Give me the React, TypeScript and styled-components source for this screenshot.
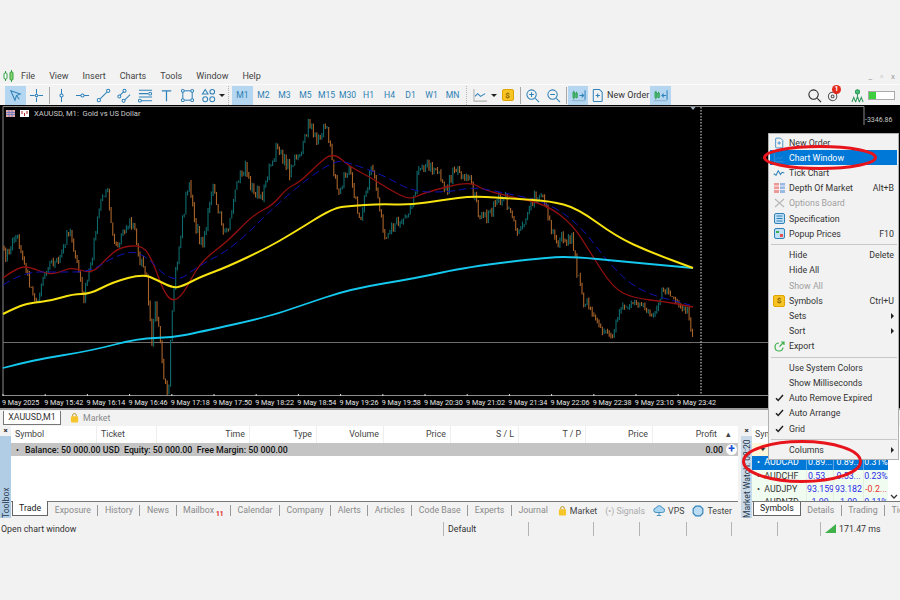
import styled, { createGlobalStyle } from "styled-components";

const GlobalStyle = createGlobalStyle`
  html, body {
    margin: 0;
    padding: 0;
    background: #f2f2f2;
  }
  * {
    box-sizing: border-box;
  }
`;

const Page = styled.div`
  position: relative;
  width: 900px;
  height: 600px;
  overflow: hidden;
  background: #f2f2f2;
  color: #333;
  font-family: Roboto, "Noto Sans", sans-serif;
  font-size: 8.8px;
  padding-top: 68px;
`;

const MenuBar = styled.div`
  display: flex;
  align-items: center;
  height: 16px;
`;

const AppIcon = styled.svg`
  width: 14px;
  height: 14px;
  margin-left: 2px;
  margin-right: -2px;
`;

const MenuItem = styled.span`
  padding: 0 7px;
  font-size: 9px;
  color: #444;
`;

const WindowButtons = styled.div`
  display: flex;
  gap: 8px;
  margin-left: auto;
  margin-right: 5px;
  color: #999;
  font-size: 8px;
`;

const Toolbar = styled.div`
  display: flex;
  align-items: center;
  height: 21px;
  padding-left: 5px;
  border-top: 1px solid #fbfbfb;
`;

const ToolButton = styled.div<{ $active?: boolean; $w?: number }>`
  display: flex;
  align-items: center;
  justify-content: center;
  flex: none;
  width: ${(p) => p.$w ?? 21}px;
  height: 19px;
  background: ${(p) => (p.$active ? "#b4d6f0" : "transparent")};
  color: #2c7fb4;
  font-size: 8.6px;
`;

const Sep = styled.div<{ $w?: number }>`
  flex: none;
  width: ${(p) => p.$w ?? 4}px;
  height: 17px;
  margin: 0;
  background: linear-gradient(#a8a8a8, #a8a8a8) center / 1px 100% no-repeat;
`;

const Grip = styled.div`
  flex: none;
  width: 7px;
  height: 19px;
  background: repeating-linear-gradient(#b5b5b5 0 1px, transparent 1px 2px) center / 1px 100% no-repeat;
`;

const Caret = styled.span`
  flex: none;
  width: 6px;
  height: 0;
  border: 3px solid transparent;
  border-top: 3px solid #222;
  border-bottom: 0;
`;

const Icon = styled.svg`
  width: 15px;
  height: 15px;
  fill: none;
  stroke: #2f82b8;
  stroke-width: 1.1;
`;

const Coin = styled.span`
  display: flex;
  align-items: center;
  justify-content: center;
  width: 12px;
  height: 12px;
  border-radius: 2px;
  background: #f7c325;
  border: 1px solid #e0a400;
  color: #8a6400;
  font-size: 8px;
  font-weight: bold;
`;

const OrderText = styled.span`
  flex: none;
  width: 43px;
  color: #333;
  font-size: 9px;
  white-space: nowrap;
`;

const RightTools = styled.div`
  display: flex;
  align-items: center;
  margin-left: auto;
  padding-right: 5px;
`;

const SearchIcon = styled(Icon)`
  stroke: #222;
  margin-right: 5px;
`;

const BellWrap = styled.div`
  position: relative;
  width: 14px;
  height: 14px;
  margin-right: 9px;
`;

const Badge = styled.span`
  position: absolute;
  left: 5px;
  top: -3px;
  width: 9px;
  height: 9px;
  border-radius: 50%;
  background: #e32a1c;
  color: #fff;
  font-size: 7px;
  font-weight: bold;
  line-height: 9px;
  text-align: center;
`;

const Battery = styled.div`
  width: 27px;
  height: 9px;
  margin-left: 3px;
  border: 1px solid #aaa;
  background: #fff;
`;

const BatteryLevel = styled.div`
  width: 7px;
  height: 100%;
  background: #3ecf3e;
`;

const ChartWindow = styled.div`
  display: flex;
  flex-direction: column;
  height: 305px;
  background: #000;
  position: relative;
  border-bottom: 2px solid #9a9a9a;
`;

const PlotRow = styled.div`
  display: flex;
  height: 291px;
`;

const Plot = styled.svg`
  display: block;
  flex: none;
  width: 865px;
  height: 291px;
`;

const PriceAxis = styled.div`
  flex: 1;
  padding-top: 11px;
  color: #c8c8c8;
  font-size: 7px;
`;

const TimeAxis = styled.div`
  display: flex;
  padding-left: 2px;
  height: 12px;
  align-items: center;
`;

const TimeLabel = styled.span`
  flex: none;
  width: 42.2px;
  color: #e4e4e4;
  font-size: 7.2px;
  white-space: nowrap;
`;

const Legend = styled.div`
  position: absolute;
  left: 6px;
  top: 4px;
  display: flex;
  align-items: center;
  gap: 4px;
  color: #ccc;
  font-size: 7.6px;
  white-space: pre;
`;

const ChartTabs = styled.div`
  display: flex;
  align-items: center;
  height: 15px;
  padding-left: 3px;
`;

const ChartTab = styled.div`
  display: flex;
  align-items: center;
  justify-content: center;
  width: 58px;
  height: 14px;
  background: #fff;
  border: 1px solid #777;
  border-top: 0;
  border-right-width: 1.5px;
  border-bottom-width: 1.5px;
  font-size: 8.8px;
`;

const MarketTab = styled.div`
  display: flex;
  align-items: center;
  gap: 4px;
  margin-left: 9px;
  color: #888;
  font-size: 8.8px;
`;

const Bag = styled.svg`
  width: 9px;
  height: 10px;
  flex: none;
`;

const BottomRow = styled.div`
  display: flex;
  height: 92px;
  margin-top: 1px;
`;

const ToolboxPanel = styled.div`
  display: flex;
  flex: none;
  width: 738px;
`;

const SideStrip = styled.div`
  display: flex;
  flex-direction: column;
  flex: none;
  width: 11px;
`;

const CloseMark = styled.div`
  height: 10px;
  font-size: 8px;
  font-weight: bold;
  line-height: 9px;
  text-align: center;
  color: #222;
`;

const SideTitle = styled.div<{ $tint: string }>`
  flex: 1;
  display: flex;
  align-items: center;
  justify-content: flex-start;
  writing-mode: vertical-rl;
  transform: rotate(180deg);
  background: ${(p) => p.$tint};
  color: #27384a;
  font-size: 8.6px;
  line-height: 10px;
  white-space: nowrap;
  overflow: hidden;
`;

const PanelBody = styled.div`
  display: flex;
  flex-direction: column;
  flex: 1;
  min-width: 0;
`;

const TradeList = styled.div`
  flex: 1;
  background: #fff;
  border-bottom: 1px solid #777;
`;

const TradeHead = styled.div`
  display: grid;
  grid-template-columns: 86px 60px 93px 67px 67px 67px 68px 67px 67px 1fr;
  height: 17px;
  align-items: center;
`;

const HeadCell = styled.div<{ $left?: boolean }>`
  height: 100%;
  padding: 0 4px;
  line-height: 17px;
  text-align: ${(p) => (p.$left ? "left" : "right")};
  border-right: 1px solid #eee;
  color: #444;
  font-size: 8.8px;
`;

const ProfitCell = styled(HeadCell)`
  display: flex;
  justify-content: flex-end;
  gap: 9px;
  padding-right: 7px;
  border-right: 0;
`;

const BalanceRow = styled.div`
  display: flex;
  align-items: center;
  height: 13px;
  padding-left: 5px;
  background: #c4c4c4;
  color: #111;
  font-size: 8.8px;
  font-weight: 500;
  white-space: pre;
`;

const Bullet = styled.span`
  width: 9px;
  font-weight: normal;
`;

const BalanceTotal = styled.span`
  margin-left: auto;
  margin-right: 3px;
`;

const PlusBadge = styled.span`
  width: 11px;
  height: 11px;
  margin-right: 1px;
  border-radius: 50%;
  background: #fff;
  color: #1c4fd8;
  font-size: 12px;
  font-weight: bold;
  line-height: 10px;
  text-align: center;
`;

const TabBar = styled.div`
  display: flex;
  align-items: flex-start;
  flex: none;
  height: 16px;
  padding-left: 1px;
`;

const ActiveTab = styled.div`
  flex: none;
  height: 15px;
  padding: 0 6px;
  margin-top: -1px;
  background: #fff;
  border: 1px solid #666;
  border-top: 0;
  border-bottom-width: 1.5px;
  border-right-width: 1.5px;
  color: #222;
  font-size: 8.8px;
  line-height: 15px;
`;

const Tab = styled.div<{ $plain?: boolean }>`
  flex: none;
  height: 11px;
  margin-top: 3px;
  padding: 0 6.5px;
  border-right: ${(p) => (p.$plain ? "0" : "1px solid #999")};
  color: #8a8a8a;
  font-size: 8.8px;
  line-height: 11px;
`;

const MailCount = styled.sup`
  color: #e02020;
  font-size: 6.6px;
  margin-left: 2px;
  vertical-align: -3px;
  font-weight: bold;
`;

const SideLinks = styled.div`
  display: flex;
  align-items: center;
  gap: 8px;
  margin-left: auto;
  margin-top: 2px;
  padding-right: 6px;
  height: 14px;
`;

const SideLink = styled.span<{ $muted?: boolean }>`
  display: flex;
  align-items: center;
  gap: 3px;
  color: ${(p) => (p.$muted ? "#aaa" : "#444")};
  font-size: 8.8px;
  white-space: nowrap;
`;

const SmallIcon = styled(Icon)`
  width: 12px;
  height: 12px;
`;

const WatchPanel = styled.div`
  display: flex;
  flex: 1;
  margin-left: 3px;
  min-width: 0;
`;

const WatchList = styled.div`
  position: relative;
  flex: 1;
  background: #fff;
  border-bottom: 1px solid #777;
  overflow: hidden;
`;

const WatchHead = styled.div`
  height: 17px;
  padding-left: 3px;
  line-height: 17px;
  color: #444;
`;

const WatchRow = styled.div<{ $bg: string }>`
  display: grid;
  grid-template-columns: 54px 27px 30px 25px;
  height: 13.3px;
  width: 136px;
  background: ${(p) => p.$bg};
  line-height: 13px;
  font-size: 8.8px;
`;

const WatchName = styled.span<{ $selected?: boolean }>`
  padding-left: 5px;
  color: ${(p) => (p.$selected ? "#fff" : "#333")};
  white-space: pre;
  overflow: hidden;
`;

const WatchValue = styled.span<{ $color: string; $line?: boolean }>`
  text-align: center;
  color: ${(p) => p.$color};
  border-left: 1px solid ${(p) => (p.$line ? "#5aa5e4" : "#e4efe4")};
  white-space: nowrap;
  overflow: hidden;
`;

const ScrollDown = styled.svg`
  position: absolute;
  right: 2px;
  bottom: 1px;
  width: 8px;
  height: 6px;
`;

const StatusBar = styled.div`
  display: flex;
  align-items: center;
  height: 19px;
  margin-top: 1px;
  font-size: 8.8px;
`;

const StatusCell = styled.div<{ $w: number; $first?: boolean }>`
  flex: none;
  display: flex;
  align-items: center;
  gap: 3px;
  width: ${(p) => p.$w}px;
  height: 14px;
  padding-left: ${(p) => (p.$first ? 1 : 4)}px;
  border-left: ${(p) => (p.$first ? "0" : "1px solid #b4b4b4")};
  color: #333;
  white-space: nowrap;
`;

const ContextMenu = styled.div`
  position: absolute;
  left: 768px;
  top: 133px;
  width: 131px;
  padding: 1px;
  background: #f2f2f2;
  border: 1px solid #b0b0b0;
`;

const MenuRow = styled.div<{ $selected?: boolean; $disabled?: boolean }>`
  display: flex;
  align-items: center;
  height: 15.2px;
  background: ${(p) => (p.$selected ? "#0078d7" : "transparent")};
  color: ${(p) => (p.$selected ? "#fff" : p.$disabled ? "#a0a0a0" : "#333")};
  font-size: 8.8px;
`;

const MenuGlyph = styled.span`
  display: flex;
  align-items: center;
  justify-content: center;
  flex: none;
  width: 18px;
  margin-right: 1px;
`;

const MenuHint = styled.span`
  margin-left: auto;
  padding-right: 3px;
`;

const SubArrow = styled.span`
  margin-left: auto;
  margin-right: 3px;
  width: 0;
  height: 0;
  border: 3px solid transparent;
  border-left: 3.5px solid #222;
  border-right: 0;
`;

const MenuSep = styled.div`
  height: 1px;
  margin: 2.6px 0 2.7px 1px;
  background: #c8c8c8;
`;

const RedMark = styled.svg<{ $left: number; $top: number }>`
  position: absolute;
  left: ${(p) => p.$left}px;
  top: ${(p) => p.$top}px;
  overflow: visible;
  pointer-events: none;
`;

type Pt = [number, number];

const priceLine: Pt[] = [
  [4, 248], [15, 242], [23, 262], [38, 295], [53, 265], [68, 232], [83, 295], [97, 228], [107, 192], [117, 245],
  [133, 228], [147, 272], [152, 358], [155, 312], [165, 382], [168, 388], [173, 292], [189, 185], [203, 248],
  [213, 195], [227, 228], [245, 162], [262, 208], [277, 135], [290, 182], [308, 118], [317, 152], [327, 117],
  [339, 202], [350, 172], [360, 212], [372, 178], [385, 227], [402, 230], [417, 175], [440, 168], [447, 192],
  [467, 162], [480, 228], [497, 192], [510, 218], [523, 222], [545, 193], [558, 253], [572, 230], [583, 305],
  [598, 322], [613, 338], [622, 305], [633, 302], [652, 315], [662, 292], [687, 308], [693, 342],
];

const yellowLine: Pt[] = [
  [3, 314], [17, 307], [30, 303], [50, 301], [73, 294], [90, 294], [113, 282], [143, 274], [157, 280], [173, 288],
  [183, 286], [200, 277], [227, 267], [267, 248], [293, 233], [333, 208], [350, 206], [380, 204], [410, 205],
  [443, 200], [473, 196], [517, 199], [550, 201], [577, 208], [617, 237], [650, 252], [693, 268],
];

const cyanLine: Pt[] = [
  [3, 368], [33, 360], [90, 351], [140, 338], [170, 338], [200, 332], [267, 317], [300, 306], [350, 289], [417, 278],
  [467, 267], [550, 257], [577, 257], [617, 261], [693, 268],
];

const redLine: Pt[] = [
  [3, 278], [18, 267], [30, 267], [47, 274], [58, 273], [72, 267], [92, 274], [107, 258], [120, 247], [143, 245],
  [153, 262], [163, 290], [172, 302], [183, 295], [200, 262], [227, 242], [253, 215], [273, 205], [287, 188],
  [300, 182], [317, 165], [333, 152], [350, 167], [370, 177], [390, 190], [410, 200], [423, 193], [470, 181],
  [483, 190], [517, 198], [547, 205], [573, 225], [590, 252], [613, 288], [633, 298], [667, 302], [693, 307],
];

const blueLine: Pt[] = [
  [3, 285], [23, 272], [57, 272], [90, 272], [113, 257], [140, 249], [173, 285], [200, 265], [233, 248], [283, 198],
  [333, 160], [350, 163], [383, 175], [413, 192], [450, 192], [473, 187], [500, 192], [547, 202], [580, 225],
  [610, 265], [640, 292], [690, 305],
];

// midpoints give a soft curve without a real spline
function smooth(pts: Pt[]) {
  let d = `M${pts[0][0]} ${pts[0][1]}`;
  for (let i = 1; i < pts.length - 1; i++) {
    const mx = (pts[i][0] + pts[i + 1][0]) / 2;
    const my = (pts[i][1] + pts[i + 1][1]) / 2;
    d += `Q${pts[i][0]} ${pts[i][1]} ${mx} ${my}`;
  }
  const last = pts[pts.length - 1];
  return d + `L${last[0]} ${last[1]}`;
}

function priceAt(x: number) {
  for (let i = 1; i < priceLine.length; i++) {
    const [x0, y0] = priceLine[i - 1];
    const [x1, y1] = priceLine[i];
    if (x <= x1) return y0 + ((y1 - y0) * (x - x0)) / (x1 - x0);
  }
  return priceLine[priceLine.length - 1][1];
}

function makeCandles() {
  let seed = 4127;
  const rnd = () => {
    seed = (seed * 16807) % 2147483647;
    return seed / 2147483647;
  };
  let up = "";
  let down = "";
  let open = priceAt(4);
  for (let x = 4; x <= 693; x += 1.7) {
    // tail end of the chart is much calmer than the rest
    const size = x > 590 ? 8 : 20;
    const wave = Math.sin(x / 4.3) * size * 0.45;
    const close = priceAt(x) + wave + (rnd() - 0.5) * size * 0.6;
    const top = Math.min(open, close);
    const bottom = Math.max(open, close);
    const hi = (top - rnd() * 3).toFixed(1);
    const lo = (bottom + rnd() * 3).toFixed(1);
    const seg = `M${x.toFixed(1)} ${hi}V${lo}`;
    if (close > open) down += seg;
    else up += seg;
    open = close;
  }
  return { up, down };
}

const candles = makeCandles();

const timeLabels = [
  "9 May 2025", "9 May 15:42", "9 May 16:14", "9 May 16:46", "9 May 17:18", "9 May 17:50", "9 May 18:22", "9 May 18:54",
  "9 May 19:26", "9 May 19:58", "9 May 20:30", "9 May 21:02", "9 May 21:34", "9 May 22:06", "9 May 22:38", "9 May 23:10",
  "9 May 23:42",
];

const timeframes = ["M1", "M2", "M3", "M5", "M15", "M30", "H1", "H4", "D1", "W1", "MN"];

const bottomTabs = ["Exposure", "History", "News", "Mailbox", "Calendar", "Company", "Alerts", "Articles", "Code Base", "Experts", "Journal"];

const CandlesIcon = ({ dir }: { dir: "in" | "out" }) => (
  <Icon viewBox="0 0 16 16">
    <path d="M1 13.5h14" stroke="#8fb4cc" />
    <path d="M3 3v9M6 4v7" stroke="#2c9a4c" />
    <rect x="2" y="5" width="2" height="5" fill="#42b96a" stroke="#2c9a4c" strokeWidth=".6" />
    <rect x="5" y="6" width="2" height="4" fill="#42b96a" stroke="#2c9a4c" strokeWidth=".6" />
    {dir === "out" ? <path d="M9 8h4M11.5 6l2 2-2 2" /> : <path d="M14 8h-4M11.5 6l-2 2 2 2" />}
    <path d="M15 2.5v10" />
  </Icon>
);

const BagIcon = () => (
  <Bag viewBox="0 0 10 11">
    <path d="M3 4V2.5a2 2 0 0 1 4 0V4" fill="none" stroke="#b98a10" />
    <rect x="1" y="3.5" width="8" height="7" rx="1" fill="#f6c52b" />
  </Bag>
);

const Check = () => (
  <svg width="9" height="8" viewBox="0 0 9 8">
    <path d="M1 4.2l2.2 2.3L8 1" fill="none" stroke="#222" strokeWidth="1.5" />
  </svg>
);

export default function App() {
  return (
    <Page>
      <GlobalStyle />
      <MenuBar>
        <AppIcon viewBox="0 0 14 14">
          <path d="M3.5 2v10M9.5 1v12" stroke="#2ea043" />
          <rect x="2" y="4" width="3" height="6" rx="1" fill="#fff" stroke="#2ea043" />
          <rect x="8" y="3" width="3" height="8" rx="1" fill="#8ed36b" stroke="#2ea043" />
        </AppIcon>
        {["File", "View", "Insert", "Charts", "Tools", "Window", "Help"].map((m) => (
          <MenuItem key={m}>{m}</MenuItem>
        ))}
        <WindowButtons>
          <span>_</span>
          <span>▫</span>
          <span>x</span>
        </WindowButtons>
      </MenuBar>

      <Toolbar>
        <ToolButton $active>
          <Icon viewBox="0 0 16 16">
            <path d="M3 3l10 3.5-4 1.6L7.4 13z" />
            <path d="M9 8l3 4" />
          </Icon>
        </ToolButton>
        <ToolButton>
          <Icon viewBox="0 0 16 16">
            <path d="M8 1v5M8 10v5M1 8h5M10 8h5" />
            <circle cx="8" cy="8" r="1.4" />
          </Icon>
        </ToolButton>
        <Sep />
        <ToolButton>
          <Icon viewBox="0 0 16 16">
            <path d="M8 1v14" />
            <circle cx="8" cy="8" r="1.7" fill="#fff" />
          </Icon>
        </ToolButton>
        <ToolButton>
          <Icon viewBox="0 0 16 16">
            <path d="M1 8h14" />
            <circle cx="8" cy="8" r="1.7" fill="#fff" />
          </Icon>
        </ToolButton>
        <ToolButton>
          <Icon viewBox="0 0 16 16">
            <path d="M3 13L13 3" />
            <circle cx="3" cy="13" r="1.7" fill="#fff" />
            <circle cx="13" cy="3" r="1.7" fill="#fff" />
          </Icon>
        </ToolButton>
        <ToolButton>
          <Icon viewBox="0 0 16 16">
            <path d="M2 9l6-6M7 14l7-7" />
            <circle cx="2.5" cy="9" r="1.6" fill="#fff" />
            <circle cx="8" cy="3" r="1.6" fill="#fff" />
            <circle cx="7" cy="13.5" r="1.6" fill="#fff" />
          </Icon>
        </ToolButton>
        <ToolButton>
          <Icon viewBox="0 0 16 16">
            <path d="M1 2.5h14M1 6h10M1 9.5h14M3 13.5h12" />
            <circle cx="13" cy="6" r="1.5" fill="#fff" />
            <circle cx="2" cy="13.5" r="1.5" fill="#fff" />
          </Icon>
        </ToolButton>
        <ToolButton>
          <Icon viewBox="0 0 16 16">
            <path d="M3 3h10M8 3v11" strokeWidth="1.3" />
          </Icon>
        </ToolButton>
        <ToolButton>
          <Icon viewBox="0 0 16 16">
            <rect x="3" y="3" width="10" height="10" />
            <circle cx="3" cy="3" r="1.5" fill="#fff" />
            <circle cx="13" cy="3" r="1.5" fill="#fff" />
            <circle cx="3" cy="13" r="1.5" fill="#fff" />
            <circle cx="13" cy="13" r="1.5" fill="#fff" />
          </Icon>
        </ToolButton>
        <ToolButton>
          <Icon viewBox="0 0 16 16">
            <path d="M4.5 1.5l3 5h-6z" />
            <circle cx="12" cy="4" r="2.5" />
            <circle cx="4.5" cy="12" r="2.6" />
            <circle cx="12" cy="12" r="2.6" />
          </Icon>
        </ToolButton>
        <Caret />
        <Grip />
        {timeframes.map((t, i) => (
          <ToolButton key={t} $active={i === 0}>
            {t}
          </ToolButton>
        ))}
        <Grip />
        <ToolButton>
          <Icon viewBox="0 0 16 16">
            <path d="M1 1v13h14" stroke="#b0b0b0" />
            <path d="M2 9l3-3 3 3 5-3" />
          </Icon>
        </ToolButton>
        <Caret />
        <ToolButton>
          <Coin>$</Coin>
        </ToolButton>
        <Sep />
        <ToolButton>
          <Icon viewBox="0 0 16 16">
            <circle cx="7" cy="7" r="5" />
            <path d="M4.5 7h5M7 4.5v5M11 11l4 4" />
          </Icon>
        </ToolButton>
        <ToolButton>
          <Icon viewBox="0 0 16 16">
            <circle cx="7" cy="7" r="5" />
            <path d="M4.5 7h5M11 11l4 4" />
          </Icon>
        </ToolButton>
        <Sep />
        <ToolButton $active $w={20}>
          <CandlesIcon dir="out" />
        </ToolButton>
        <ToolButton $w={19}>
          <Icon viewBox="0 0 16 16">
            <path d="M3.5 2.5a1 1 0 0 1 1-1H10l3 3v9a1 1 0 0 1-1 1H4.500a1 1 0 0 1-1-1z" />
            <path d="M6 8h4.500M8.200 5.800v4.400" strokeWidth="1.2" />
          </Icon>
        </ToolButton>
        <OrderText>New Order</OrderText>
        <ToolButton $active>
          <CandlesIcon dir="in" />
        </ToolButton>
        <RightTools>
          <SearchIcon viewBox="0 0 16 16">
            <circle cx="7" cy="7" r="5" />
            <path d="M11 11l4 4" />
          </SearchIcon>
          <BellWrap>
            <Icon viewBox="0 0 16 16">
              <circle cx="6" cy="9" r="4.500" stroke="#555" />
              <circle cx="6" cy="9" r="1.500" stroke="#555" />
            </Icon>
            <Badge>1</Badge>
          </BellWrap>
          <Icon viewBox="0 0 16 16">
            <circle cx="8" cy="4" r="2.200" stroke="#2f9a5a" fill="#49c27a" />
            <path d="M8 6v3M2 15l2-5 2 5M10 15l2-5 2 5M6 15l2-6 2 6" stroke="#2f9a5a" />
          </Icon>
          <Battery>
            <BatteryLevel />
          </Battery>
        </RightTools>
      </Toolbar>

      <ChartWindow>
        <PlotRow>
          <Plot viewBox="0 105 865 291">
            <path d="M3 396V106.500H864V125" fill="none" stroke="#8c8c8c" />
            <path d="M3 395.500H864" stroke="#8c8c8c" />
            <path d="M3 342.500H864" stroke="#6e6e6e" />
            <path d="M701 107V394" stroke="#e6e6e6" strokeDasharray="1.500 1.500" />
            <path d="M690.500 107h5l-2.500 3z" fill="#9cb0c0" />
            {timeLabels.map((t, i) => (
              <path key={t} d={`M${3 + i * 42.2} 394V396`} stroke="#ddd" />
            ))}
            <path d={candles.up} stroke="#0f6a6c" strokeWidth="1.100" fill="none" />
            <path d={candles.down} stroke="#a9642a" strokeWidth="1.100" fill="none" />
            <path d={smooth(redLine)} stroke="#930f0f" strokeWidth="1.300" fill="none" />
            <path d={smooth(blueLine)} stroke="#1111b8" strokeWidth="1" strokeDasharray="8 4" fill="none" />
            <path d={smooth(cyanLine)} stroke="#14c8ee" strokeWidth="1.800" fill="none" />
            <path d={smooth(yellowLine)} stroke="#f7e30f" strokeWidth="2" fill="none" />
          </Plot>
          <PriceAxis>-3346.86</PriceAxis>
        </PlotRow>
        <TimeAxis>
          {timeLabels.map((t) => (
            <TimeLabel key={t}>{t}</TimeLabel>
          ))}
        </TimeAxis>
        <Legend>
          <svg width="24" height="7" viewBox="0 0 24 7">
            <rect width="9" height="7" fill="#e8a8a8" />
            <path d="M0 2.500h9M0 4.500h9M3 0v7M6 0v7" stroke="#5f78c8" strokeWidth=".8" />
            <rect x="14" width="9" height="7" fill="#fff" />
            <path d="M16 1v3M18.500 3v3M21 1v3" stroke="#c02020" />
          </svg>
          <span>XAUUSD, M1:  Gold vs US Dollar</span>
        </Legend>
      </ChartWindow>

      <ChartTabs>
        <ChartTab>XAUUSD,M1</ChartTab>
        <MarketTab>
          <BagIcon />
          Market
        </MarketTab>
      </ChartTabs>

      <BottomRow>
        <ToolboxPanel>
          <SideStrip>
            <CloseMark>×</CloseMark>
            <SideTitle $tint="#b1cde6">Toolbox</SideTitle>
          </SideStrip>
          <PanelBody>
            <TradeList>
              <TradeHead>
                <HeadCell $left>Symbol</HeadCell>
                <HeadCell $left>Ticket</HeadCell>
                <HeadCell>Time</HeadCell>
                <HeadCell>Type</HeadCell>
                <HeadCell>Volume</HeadCell>
                <HeadCell>Price</HeadCell>
                <HeadCell>S / L</HeadCell>
                <HeadCell>T / P</HeadCell>
                <HeadCell>Price</HeadCell>
                <ProfitCell>
                  <span>Profit</span>
                  <span>▴</span>
                </ProfitCell>
              </TradeHead>
              <BalanceRow>
                <Bullet>•</Bullet>
                Balance: 50 000.00 USD  Equity: 50 000.00  Free Margin: 50 000.00
                <BalanceTotal>0.00</BalanceTotal>
                <PlusBadge>+</PlusBadge>
              </BalanceRow>
            </TradeList>
            <TabBar>
              <ActiveTab>Trade</ActiveTab>
              {bottomTabs.map((t, i) => (
                <Tab key={t} $plain={i === bottomTabs.length - 1}>
                  {t}
                  {t === "Mailbox" && <MailCount>11</MailCount>}
                </Tab>
              ))}
              <SideLinks>
                <SideLink>
                  <BagIcon />
                  Market
                </SideLink>
                <SideLink $muted>(•) Signals</SideLink>
                <SideLink>
                  <SmallIcon viewBox="0 0 16 16">
                    <path d="M4 10a3 3 0 0 1 0-6 4.500 4.500 0 0 1 8.500 0 3 3 0 0 1 0 6z" fill="#a9d5f2" />
                    <path d="M8 10v4M5 14h6" />
                  </SmallIcon>
                  VPS
                </SideLink>
                <SideLink>
                  <SmallIcon viewBox="0 0 16 16">
                    <path d="M5 1.500h6L14.500 5v6L11 14.500H5L1.500 11V5z" fill="#bcdcf4" strokeWidth="1.500" />
                  </SmallIcon>
                  Tester
                </SideLink>
              </SideLinks>
            </TabBar>
          </PanelBody>
        </ToolboxPanel>

        <WatchPanel>
          <SideStrip>
            <CloseMark>×</CloseMark>
            <SideTitle $tint="#c9d9e8">Market Watch: 08:20</SideTitle>
          </SideStrip>
          <PanelBody>
            <WatchList>
              <WatchHead>Symbol</WatchHead>
              <WatchRow $bg="#fdf6d8">
                <WatchName> ✦ XAUUSD</WatchName>
              </WatchRow>
              <WatchRow $bg="#0078d7">
                <WatchName $selected>•  AUDCAD</WatchName>
                <WatchValue $color="#fff" $line>0.89...</WatchValue>
                <WatchValue $color="#fff" $line>0.89...</WatchValue>
                <WatchValue $color="#fff" $line>0.31%</WatchValue>
              </WatchRow>
              <WatchRow $bg="#f1fcf1">
                <WatchName>•  AUDCHF</WatchName>
                <WatchValue $color="#2a2ae8">0.53...</WatchValue>
                <WatchValue $color="#2a2ae8">0.53...</WatchValue>
                <WatchValue $color="#2a2ae8">0.23%</WatchValue>
              </WatchRow>
              <WatchRow $bg="#f1fcf1">
                <WatchName>•  AUDJPY</WatchName>
                <WatchValue $color="#2a2ae8">93.159</WatchValue>
                <WatchValue $color="#2a2ae8">93.182</WatchValue>
                <WatchValue $color="#e83030">-0.2...</WatchValue>
              </WatchRow>
              <WatchRow $bg="#f1fcf1">
                <WatchName>•  AUDNZD</WatchName>
                <WatchValue $color="#2a2ae8">1.09</WatchValue>
                <WatchValue $color="#2a2ae8">1.09</WatchValue>
                <WatchValue $color="#2a2ae8">0.11%</WatchValue>
              </WatchRow>
              <ScrollDown viewBox="0 0 8 6">
                <path d="M1 1l3 3 3-3" fill="none" stroke="#333" strokeWidth="1.300" />
              </ScrollDown>
            </WatchList>
            <TabBar>
              <ActiveTab>Symbols</ActiveTab>
              <Tab>Details</Tab>
              <Tab>Trading</Tab>
              <Tab $plain>Ticks</Tab>
            </TabBar>
          </PanelBody>
        </WatchPanel>
      </BottomRow>

      <StatusBar>
        <StatusCell $first $w={443}>Open chart window</StatusCell>
        <StatusCell $w={85}>Default</StatusCell>
        <StatusCell $w={65} />
        <StatusCell $w={46} />
        <StatusCell $w={47} />
        <StatusCell $w={45} />
        <StatusCell $w={46} />
        <StatusCell $w={43} />
        <StatusCell $w={70}>
          <svg width="11" height="9" viewBox="0 0 11 9">
            <path d="M0 9L11 0v9z" fill="#3fb04a" />
          </svg>
          171.47 ms
        </StatusCell>
      </StatusBar>

      <ContextMenu>
        <MenuRow>
          <MenuGlyph>
            <SmallIcon viewBox="0 0 16 16">
              <path d="M3.500 2.500a1 1 0 0 1 1-1H10l3 3v9a1 1 0 0 1-1 1H4.500a1 1 0 0 1-1-1z" />
              <path d="M6 8h4.500M8.200 5.800v4.400" />
            </SmallIcon>
          </MenuGlyph>
          New Order
        </MenuRow>
        <MenuRow $selected>
          <MenuGlyph>
            <SmallIcon viewBox="0 0 16 16">
              <path d="M2 2v11h12M4 10l3-3 3 2 3-3" stroke="#3f8fd0" />
            </SmallIcon>
          </MenuGlyph>
          Chart Window
        </MenuRow>
        <MenuRow>
          <MenuGlyph>
            <SmallIcon viewBox="0 0 16 16">
              <path d="M1 9l3 2 3-6 3 5 2-3 3 1" strokeWidth="1.400" />
            </SmallIcon>
          </MenuGlyph>
          Tick Chart
        </MenuRow>
        <MenuRow>
          <MenuGlyph>
            <svg width="11" height="10" viewBox="0 0 11 10">
              <rect width="5" height="10" fill="#ec9a96" />
              <rect x="6" width="5" height="10" fill="#9ab8e4" />
              <path d="M0 3h11M0 6.500h11" stroke="#fff" strokeWidth=".8" />
            </svg>
          </MenuGlyph>
          Depth Of Market
          <MenuHint>Alt+B</MenuHint>
        </MenuRow>
        <MenuRow $disabled>
          <MenuGlyph>
            <svg width="11" height="10" viewBox="0 0 11 10">
              <path d="M1 1l9 8M10 1L1 9" stroke="#b8b8b8" strokeWidth="1.200" />
            </svg>
          </MenuGlyph>
          Options Board
        </MenuRow>
        <MenuRow>
          <MenuGlyph>
            <svg width="11" height="11" viewBox="0 0 11 11">
              <rect x=".5" y=".5" width="10" height="10" rx="1.500" fill="#bfe0f6" stroke="#2f82b8" />
              <path d="M2.500 3h6M2.500 5.500h6M2.500 8h6" stroke="#2f82b8" />
            </svg>
          </MenuGlyph>
          Specification
        </MenuRow>
        <MenuRow>
          <MenuGlyph>
            <svg width="11" height="11" viewBox="0 0 11 11">
              <rect x=".5" y=".5" width="10" height="10" rx="1.500" fill="#bfe0f6" stroke="#2f82b8" />
              <rect x="2" y="3" width="3" height="2" fill="#3fb04a" />
              <rect x="6" y="6" width="3" height="3" fill="#e85050" />
            </svg>
          </MenuGlyph>
          Popup Prices
          <MenuHint>F10</MenuHint>
        </MenuRow>
        <MenuSep />
        <MenuRow>
          <MenuGlyph />
          Hide
          <MenuHint>Delete</MenuHint>
        </MenuRow>
        <MenuRow>
          <MenuGlyph />
          Hide All
        </MenuRow>
        <MenuRow $disabled>
          <MenuGlyph />
          Show All
        </MenuRow>
        <MenuRow>
          <MenuGlyph>
            <Coin>$</Coin>
          </MenuGlyph>
          Symbols
          <MenuHint>Ctrl+U</MenuHint>
        </MenuRow>
        <MenuRow>
          <MenuGlyph />
          Sets
          <SubArrow />
        </MenuRow>
        <MenuRow>
          <MenuGlyph />
          Sort
          <SubArrow />
        </MenuRow>
        <MenuRow>
          <MenuGlyph>
            <svg width="11" height="11" viewBox="0 0 11 11" fill="none" stroke="#3fb04a" strokeWidth="1.200">
              <path d="M9 6.500A4 4 0 1 1 5 2" />
              <path d="M5.500 5.500L10 1M7 1h3v3" />
            </svg>
          </MenuGlyph>
          Export
        </MenuRow>
        <MenuSep />
        <MenuRow>
          <MenuGlyph />
          Use System Colors
        </MenuRow>
        <MenuRow>
          <MenuGlyph />
          Show Milliseconds
        </MenuRow>
        <MenuRow>
          <MenuGlyph>
            <Check />
          </MenuGlyph>
          Auto Remove Expired
        </MenuRow>
        <MenuRow>
          <MenuGlyph>
            <Check />
          </MenuGlyph>
          Auto Arrange
        </MenuRow>
        <MenuRow>
          <MenuGlyph>
            <Check />
          </MenuGlyph>
          Grid
        </MenuRow>
        <MenuSep />
        <MenuRow>
          <MenuGlyph />
          Columns
          <SubArrow />
        </MenuRow>
      </ContextMenu>

      <RedMark $left={763} $top={145} width="114" height="25" viewBox="0 0 114 25">
        <ellipse cx="57" cy="12.500" rx="55.500" ry="11" fill="none" stroke="#e8141c" strokeWidth="3" />
      </RedMark>
      <RedMark $left={742} $top={440} width="120" height="43" viewBox="0 0 120 43">
        <ellipse cx="60" cy="21.500" rx="58.500" ry="20" fill="none" stroke="#e8141c" strokeWidth="3" />
      </RedMark>
    </Page>
  );
}
